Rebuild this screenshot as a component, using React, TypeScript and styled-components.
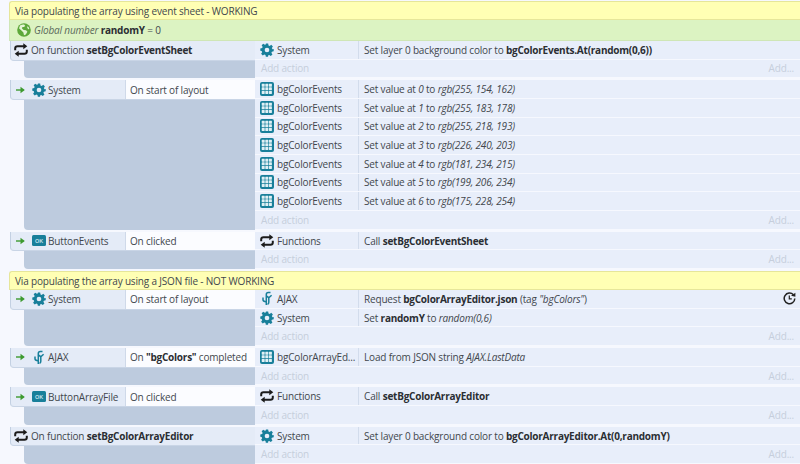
import React from "react";
import styled, { createGlobalStyle } from "styled-components";

const Global = createGlobalStyle`
  html, body { margin: 0; padding: 0; background: #f6f8fe; }
  body { font-family: "Open Sans", "Noto Sans", sans-serif; font-size: 10px; letter-spacing: -0.17px; color: #42474d; }
  b { color: #2b2e33; letter-spacing: -0.24px; }
`;

const Sheet = styled.div`
  width: 800px; height: 464px; overflow: hidden; padding: 1px 0 0 9px; box-sizing: border-box;
  display: flex; flex-direction: column; align-items: stretch;
`;
const Comment = styled.div<{ $gap?: boolean }>`
  height: 19px; box-sizing: border-box; background: #ffffb4; border: 1px solid #e6e69a; border-right: none;
  border-radius: 3px 0 0 0; padding-left: 5px; display: flex; align-items: center; flex: none;
  margin-top: ${(p) => (p.$gap ? "2px" : "0")};
`;
const GlobalVar = styled.div`
  height: 21px; box-sizing: border-box; background: #dcf3c2; border: 1px solid #cfe6b6; border-top: none; border-right: none;
  padding-left: 7px; display: flex; align-items: center; gap: 3px; flex: none;
  i { color: #5b6a5b; }
`;
const Event = styled.div<{ $rows: number; $last?: boolean }>`
  display: grid; grid-template-columns: 245px 1fr; margin-left: 1px; flex: none;
  height: ${(p) => p.$rows * 18.67}px;
  margin-bottom: ${(p) => (p.$last ? 0 : 2)}px;
`;
const Left = styled.div`display: flex; flex-direction: column;`;
const Conditions = styled.div`
  height: 19.5px; flex: none; display: grid; grid-template-columns: 113.5px 1fr;
  background: #e4ebf7; border-left: 1px solid #c3d0e2; border-bottom: 1px solid #c9d5e6; border-radius: 0 0 0 4px; box-sizing: border-box;
`;
const FunctionHead = styled(Conditions)`
  display: flex; align-items: center; gap: 3px; padding-left: 3px;
`;
const ObjectCell = styled.div`display: flex; align-items: center; padding-left: 5px; min-width: 0; white-space: nowrap;`;
const CondText = styled.div`
  background: #fbfcff; border-left: 1px solid #cfd9e9; padding-left: 4.5px; display: flex; align-items: center; white-space: pre;
`;
const Gutter = styled.div`
  flex: 1; margin-left: 14px; background: #bdcbde; border-radius: 0 0 0 4px;
`;
const Actions = styled.div`display: flex; flex-direction: column; background: #f6f8fe;`;
const ActionRow = styled.div`
  height: 17.67px; flex: none; margin-bottom: 1px; display: grid; grid-template-columns: 103.5px 1fr;
  background: #e8eefa; position: relative;
`;
const ActionObject = styled.div`
  display: flex; align-items: center; gap: 3px; padding-left: 5px; border-right: 1px solid #d2dcec; white-space: nowrap; overflow: hidden;
`;
const ActionText = styled.div`padding-left: 5.5px; display: flex; align-items: center; white-space: pre;`;
const AddRow = styled.div`
  height: 17.67px; flex: none; background: #e8eefa; color: #c6cedc; display: flex; align-items: center; justify-content: space-between;
  padding: 0 6px 0 6px;
`;
const Timer = styled.span`position: absolute; right: 4px; top: 2px; display: flex;`;
const Icon = styled.svg<{ $mr?: number; $ml?: number }>`
  flex: none; margin-right: ${(p) => p.$mr ?? 0}px; margin-left: ${(p) => p.$ml ?? 0}px;
`;
const NameLabel = styled.span`margin-left: 2px;`;

const Gear = () => (
  <Icon width="14" height="14" viewBox="0 0 24 24">
    <path fill="#187f9a" fillRule="evenodd" d="M10 1h4l.6 3.1c.7.2 1.4.5 2 .9l2.7-1.8 2.8 2.8-1.8 2.7c.4.6.7 1.3.9 2L23.5 10.4v3.9l-3.1.6c-.2.7-.5 1.4-.9 2l1.8 2.7-2.8 2.8-2.7-1.8c-.6.4-1.3.7-2 .9L13.9 23.5h-3.9l-.6-3.1c-.7-.2-1.4-.5-2-.9l-2.7 1.8-2.8-2.8 1.8-2.7c-.4-.6-.7-1.3-.9-2L.5 13.2v-3.9l3.2-.6c.2-.7.5-1.4.9-2L2.8 4 5.6 1.2l2.7 1.9c.6-.4 1.3-.7 2-.9L10 1zM12 8a4 4 0 1 0 0 8 4 4 0 0 0 0-8z" />
  </Icon>
);
const ArrayIcon = () => (
  <Icon width="14" height="14" viewBox="0 0 14 14">
    <rect x="0" y="0" width="14" height="14" rx="2" fill="#187f9a" />
    {[1.7, 5.3, 8.9].map((y) =>
      [1.7, 5.3, 8.9].map((x) => <rect key={`${x}-${y}`} x={x} y={y} width="3" height="3" rx="0.4" fill="#dff0f5" />)
    )}
  </Icon>
);
const Loop = () => (
  <Icon width="14" height="14" viewBox="0 0 14 14">
    <path fill="none" stroke="#1b1b1b" strokeWidth="2" d="M1.200 7.200V5.400C1.200 4 2.200 3.200 3.500 3.200H10M12.800 6.800v1.800c0 1.400-1 2.200-2.300 2.200H4" />
    <path fill="#1b1b1b" d="M9.300.2 13.300 3.200 9.300 6.200zM4.700 7.800.7 10.800l4 3z" />
  </Icon>
);
const Button = () => (
  <Icon width="14" height="11" viewBox="0 0 14 11">
    <rect width="14" height="11" rx="1.500" fill="#187f9a" />
    <text x="7" y="7.500" fontSize="5.500" fontWeight="700" fill="#bfdfe9" textAnchor="middle" fontFamily="Liberation Sans, sans-serif" letterSpacing="0">OK</text>
  </Icon>
);
const Ajax = () => (
  <Icon width="14" height="15" viewBox="0 0 14 15">
    <path fill="none" stroke="#187f9a" strokeWidth="1.500" d="M10.500 1.400H8.300C7 1.400 6.300 2.200 6.300 3.400V14" />
    <path fill="none" stroke="#187f9a" strokeWidth="1.500" d="M3 6.500v2.300c0 1.200.9 1.900 3.300 1.900" />
    <path fill="none" stroke="#187f9a" strokeWidth="1.500" d="M8.800 5.500V11.200c0 .9-.2 1.700-1.300 2.200M11.600 4.300 8.800 6.800 6.300 4.800" />
  </Icon>
);
const Globe = () => (
  <Icon width="14" height="14" viewBox="0 0 14 14">
    <circle cx="7" cy="7" r="6.800" fill="#5ea83a" />
    <path fill="#e4f4d4" d="M3 2.600c1.400-.9 3-1.200 4.400-.9l.8 1.200-1.300 1.200-1.500-.1-.4 1.400 1.700 1.600 2.300.3 1.400 1.500-1.600 2.800-1.800.6-.6-2.700L4.400 7.500 2 5.200zM10.500 2.900l1.700 2-.2 1.500-1.800-1.400z" />
  </Icon>
);
const Clock = () => (
  <Icon width="13" height="13" viewBox="0 0 13 13">
    <path fill="none" stroke="#222" strokeWidth="1.500" d="M10.400 2.800A5.300 5.300 0 1 0 11.800 6.500" />
    <path fill="#222" d="M8 3.800 12.400.8v4z" />
    <path fill="none" stroke="#222" strokeWidth="1.200" d="M6.300 3.500v3.400h2.500" />
  </Icon>
);
const Arrow = () => (
  <Icon width="9" height="8" viewBox="0 0 9 8" $mr={7}>
    <path fill="none" stroke="#3d9a2f" strokeWidth="1.400" d="M0 4h7.500" />
    <path fill="#3d9a2f" d="M4.500.8 8.800 4 4.500 7.200z" />
  </Icon>
);

type Kind = "gear" | "array" | "loop" | "ajax";
const ActionIcon = ({ kind }: { kind: Kind }) =>
  kind === "gear" ? <Gear /> : kind === "array" ? <ArrayIcon /> : kind === "loop" ? <Loop /> : <Ajax />;

const Action = ({ kind, name, timer, children }: { kind: Kind; name: string; timer?: boolean; children: React.ReactNode }) => (
  <ActionRow>
    <ActionObject><ActionIcon kind={kind} />{name}</ActionObject>
    <ActionText>{children}</ActionText>
    {timer && <Timer><Clock /></Timer>}
  </ActionRow>
);
const Add = () => (<AddRow><span>Add action</span><span>Add...</span></AddRow>);

const Trigger = ({ icon, name, children }: { icon: React.ReactNode; name: string; children: React.ReactNode }) => (
  <Conditions>
    <ObjectCell><Arrow />{icon}<NameLabel>{name}</NameLabel></ObjectCell>
    <CondText>{children}</CondText>
  </Conditions>
);

const SetValue = ({ i, rgb }: { i: number; rgb: string }) => (
  <Action kind="array" name="bgColorEvents">Set value at <i>{i}</i> to <i>rgb({rgb})</i></Action>
);

export default function App() {
  return (
    <Sheet>
      <Global />
      <Comment>Via populating the array using event sheet - WORKING</Comment>
      <GlobalVar><Globe /><span><i>Global number</i> <b>randomY</b> = 0</span></GlobalVar>
      <Event $rows={2}>
        <Left>
          <FunctionHead><Loop /><span>On function <b>setBgColorEventSheet</b></span></FunctionHead>
          <Gutter />
        </Left>
        <Actions>
          <Action kind="gear" name="System">Set layer 0 background color to <b>bgColorEvents.At(random(0,6))</b></Action>
          <Add />
        </Actions>
      </Event>
      <Event $rows={8}>
        <Left>
          <Trigger icon={<Gear />} name="System">On start of layout</Trigger>
          <Gutter />
        </Left>
        <Actions>
          <SetValue i={0} rgb="255, 154, 162" />
          <SetValue i={1} rgb="255, 183, 178" />
          <SetValue i={2} rgb="255, 218, 193" />
          <SetValue i={3} rgb="226, 240, 203" />
          <SetValue i={4} rgb="181, 234, 215" />
          <SetValue i={5} rgb="199, 206, 234" />
          <SetValue i={6} rgb="175, 228, 254" />
          <Add />
        </Actions>
      </Event>
      <Event $rows={2} $last>
        <Left>
          <Trigger icon={<Button />} name="ButtonEvents">On clicked</Trigger>
          <Gutter />
        </Left>
        <Actions>
          <Action kind="loop" name="Functions">Call <b>setBgColorEventSheet</b></Action>
          <Add />
        </Actions>
      </Event>
      <Comment $gap>Via populating the array using a JSON file - NOT WORKING</Comment>
      <Event $rows={3}>
        <Left>
          <Trigger icon={<Gear />} name="System">On start of layout</Trigger>
          <Gutter />
        </Left>
        <Actions>
          <Action kind="ajax" name="AJAX" timer>Request <b>bgColorArrayEditor.json</b> (tag <i>"bgColors"</i>)</Action>
          <Action kind="gear" name="System">Set <b>randomY</b> to <i>random(0,6)</i></Action>
          <Add />
        </Actions>
      </Event>
      <Event $rows={2}>
        <Left>
          <Trigger icon={<Ajax />} name="AJAX">On <b>"bgColors"</b> completed</Trigger>
          <Gutter />
        </Left>
        <Actions>
          <Action kind="array" name="bgColorArrayEd...">Load from JSON string <i>AJAX.LastData</i></Action>
          <Add />
        </Actions>
      </Event>
      <Event $rows={2}>
        <Left>
          <Trigger icon={<Button />} name="ButtonArrayFile">On clicked</Trigger>
          <Gutter />
        </Left>
        <Actions>
          <Action kind="loop" name="Functions">Call <b>setBgColorArrayEditor</b></Action>
          <Add />
        </Actions>
      </Event>
      <Event $rows={2} $last>
        <Left>
          <FunctionHead><Loop /><span>On function <b>setBgColorArrayEditor</b></span></FunctionHead>
          <Gutter />
        </Left>
        <Actions>
          <Action kind="gear" name="System">Set layer 0 background color to <b>bgColorArrayEditor.At(0,randomY)</b></Action>
          <Add />
        </Actions>
      </Event>
    </Sheet>
  );
}
